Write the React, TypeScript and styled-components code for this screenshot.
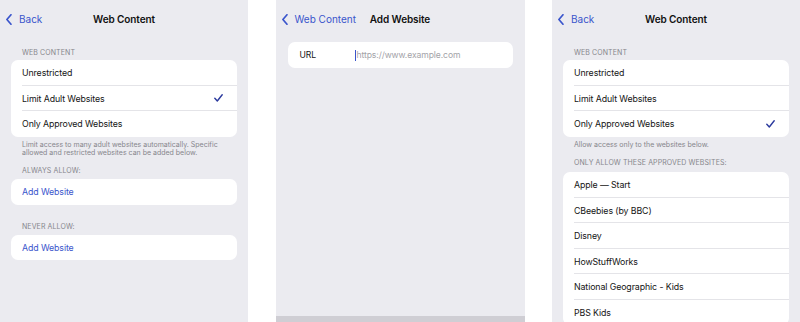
import React from "react";
import styled, { createGlobalStyle } from "styled-components";

const Global = createGlobalStyle`
  html, body { margin: 0; padding: 0; background: #ffffff; }
  body { font-family: Inter, "Noto Sans", "Liberation Sans", sans-serif; -webkit-font-smoothing: antialiased; }
  * { box-sizing: border-box; }
`;

const BLUE = "#3a55cc";
const NAVY = "#2b3a9e";
const GREY_TEXT = "#86868c";
const BG = "#ebebf0";

const Page = styled.div`
  width: 800px;
  height: 322px;
  display: flex;
  justify-content: space-between;
  overflow: hidden;
`;

const Panel = styled.div<{ $w: number }>`
  width: ${(p) => p.$w}px;
  flex: none;
  height: 322px;
  background: ${BG};
  display: flex;
  flex-direction: column;
  overflow: hidden;
`;

const NavBar = styled.div`
  height: 38px;
  flex: none;
  display: grid;
  grid-template-columns: 1fr auto 1fr;
  align-items: center;
`;

const BackButton = styled.div`
  display: flex;
  align-items: center;
  gap: 7px;
  padding-left: 6px;
  color: ${BLUE};
  font-size: 10px;
  white-space: nowrap;
`;

const NavTitle = styled.div`
  font-size: 10px;
  font-weight: 600;
  letter-spacing: -0.1px;
  color: #111;
  white-space: nowrap;
`;

const Content = styled.div<{ $pad?: number }>`
  flex: 1;
  padding: 0 ${(p) => p.$pad ?? 11}px;
  display: flex;
  flex-direction: column;
`;

const SectionHeader = styled.div<{ $top: number; $bottom?: number }>`
  margin-top: ${(p) => p.$top}px;
  margin-bottom: ${(p) => p.$bottom ?? 3}px;
  padding-left: 11px;
  font-size: 7px;
  line-height: 10px;
  letter-spacing: 0.1px;
  color: ${GREY_TEXT};
  text-transform: uppercase;
`;

const Card = styled.div<{ $top?: number }>`
  margin-top: ${(p) => p.$top ?? 0}px;
  background: #ffffff;
  border-radius: 7px;
  overflow: hidden;
  flex: none;
`;

const Row = styled.div<{ $last?: boolean; $blue?: boolean }>`
  position: relative;
  height: 25.5px;
  display: flex;
  align-items: center;
  justify-content: space-between;
  padding: 0 14px 0 11px;
  font-size: 8.8px;
  letter-spacing: -0.1px;
  color: ${(p) => (p.$blue ? BLUE : "#141414")};
  white-space: nowrap;
  &::after {
    content: "";
    display: ${(p) => (p.$last ? "none" : "block")};
    position: absolute;
    left: 11px;
    right: 0;
    bottom: 0;
    height: 1px;
    background: #e4e4e8;
  }
`;

const Footer = styled.div`
  padding: 4px 11px 0 11px;
  font-size: 7px;
  line-height: 8.5px;
  color: ${GREY_TEXT};
`;

const FieldRow = styled.div`
  height: 26px;
  display: flex;
  align-items: center;
  padding-left: 12px;
  font-size: 8.6px;
  letter-spacing: -0.1px;
`;

const FieldLabel = styled.div`
  width: 55px;
  color: #141414;
`;

const Cursor = styled.span`
  width: 1px;
  height: 11px;
  background: ${BLUE};
  margin-right: 1px;
`;

const Placeholder = styled.span`
  color: #a3a3a8;
`;

const BottomBar = styled.div`
  height: 6px;
  flex: none;
  margin-top: auto;
  background: #cfced4;
`;

const Chevron = () => (
  <svg width="6" height="11" viewBox="0 0 6 11" fill="none">
    <path d="M5 0.8 L0.9 5.5 L5 10.2" stroke={BLUE} strokeWidth="1.7" strokeLinecap="round" strokeLinejoin="round" />
  </svg>
);

const Check = () => (
  <svg width="9" height="8" viewBox="0 0 9 8" fill="none">
    <path d="M0.8 4.2 L3.3 7 L8.2 0.8" stroke={NAVY} strokeWidth="1.4" strokeLinecap="round" strokeLinejoin="round" />
  </svg>
);

const Nav: React.FC<{ back: string; title: string }> = ({ back, title }) => (
  <NavBar>
    <BackButton>
      <Chevron />
      {back}
    </BackButton>
    <NavTitle>{title}</NavTitle>
    <div />
  </NavBar>
);

const options = ["Unrestricted", "Limit Adult Websites", "Only Approved Websites"];

const OptionsCard: React.FC<{ selected: number }> = ({ selected }) => (
  <Card>
    {options.map((o, i) => (
      <Row key={o} $last={i === options.length - 1}>
        <span>{o}</span>
        {i === selected && <Check />}
      </Row>
    ))}
  </Card>
);

const approved = [
  "Apple — Start",
  "CBeebies (by BBC)",
  "Disney",
  "HowStuffWorks",
  "National Geographic - Kids",
  "PBS Kids",
];

export default function App() {
  return (
    <>
      <Global />
      <Page>
        <Panel $w={248}>
          <Nav back="Back" title="Web Content" />
          <Content>
            <SectionHeader $top={10} $bottom={2}>Web Content</SectionHeader>
            <OptionsCard selected={1} />
            <Footer>
              Limit access to many adult websites automatically. Specific allowed and restricted websites can be added below.
            </Footer>
            <SectionHeader $top={8.5}>Always Allow:</SectionHeader>
            <Card>
              <Row $last $blue>Add Website</Row>
            </Card>
            <SectionHeader $top={17}>Never Allow:</SectionHeader>
            <Card>
              <Row $last $blue>Add Website</Row>
            </Card>
          </Content>
        </Panel>
        <Panel $w={249}>
          <Nav back="Web Content" title="Add Website" />
          <Content $pad={12}>
            <Card $top={4}>
              <FieldRow>
                <FieldLabel>URL</FieldLabel>
                <Cursor />
                <Placeholder>https://www.example.com</Placeholder>
              </FieldRow>
            </Card>
          </Content>
          <BottomBar />
        </Panel>
        <Panel $w={248}>
          <Nav back="Back" title="Web Content" />
          <Content>
            <SectionHeader $top={10} $bottom={2}>Web Content</SectionHeader>
            <OptionsCard selected={2} />
            <Footer>Allow access only to the websites below.</Footer>
            <SectionHeader $top={9} $bottom={4}>Only Allow These Approved Websites:</SectionHeader>
            <Card>
              {approved.map((a) => (
                <Row key={a}>
                  <span>{a}</span>
                </Row>
              ))}
            </Card>
          </Content>
        </Panel>
      </Page>
    </>
  );
}
